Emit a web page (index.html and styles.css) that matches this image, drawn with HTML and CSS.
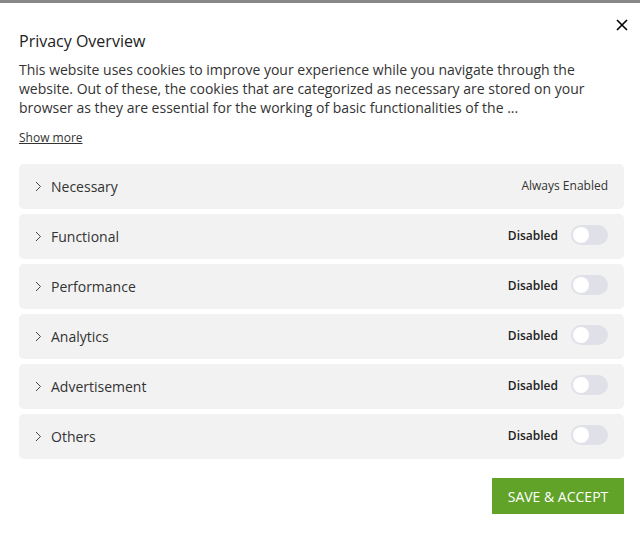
FILE: index.html
```html
<!DOCTYPE html>
<html lang="en">
<head>
<meta charset="utf-8">
<title>Privacy Overview</title>
<link rel="stylesheet" href="styles.css">
</head>
<body>
<div class="topbar"></div>
<div class="modal">
  <button class="close" aria-label="Close">
    <svg width="12" height="12" viewBox="0 0 12 12"><path d="M1 1L11 11M11 1L1 11" stroke="#000" stroke-width="1.6" fill="none"/></svg>
  </button>
  <h2 class="title">Privacy Overview</h2>
  <p class="desc">This website uses cookies to improve your experience while you navigate through the website. Out of these, the cookies that are categorized as necessary are stored on your browser as they are essential for the working of basic functionalities of the ...</p>
  <a class="more" href="#">Show more</a>
  <div class="list">
    <div class="row">
      <div class="label"><svg class="chev" width="7" height="11" viewBox="0 0 7 11"><path d="M1 1L5.5 5.5L1 10" stroke="#444" stroke-width="1" fill="none"/></svg>Necessary</div>
      <span class="always">Always Enabled</span>
    </div>
    <div class="row">
      <div class="label"><svg class="chev" width="7" height="11" viewBox="0 0 7 11"><path d="M1 1L5.5 5.5L1 10" stroke="#444" stroke-width="1" fill="none"/></svg>Functional</div>
      <div class="state"><span class="dis">Disabled</span><span class="toggle"><span class="knob"></span></span></div>
    </div>
    <div class="row">
      <div class="label"><svg class="chev" width="7" height="11" viewBox="0 0 7 11"><path d="M1 1L5.5 5.5L1 10" stroke="#444" stroke-width="1" fill="none"/></svg>Performance</div>
      <div class="state"><span class="dis">Disabled</span><span class="toggle"><span class="knob"></span></span></div>
    </div>
    <div class="row">
      <div class="label"><svg class="chev" width="7" height="11" viewBox="0 0 7 11"><path d="M1 1L5.5 5.5L1 10" stroke="#444" stroke-width="1" fill="none"/></svg>Analytics</div>
      <div class="state"><span class="dis">Disabled</span><span class="toggle"><span class="knob"></span></span></div>
    </div>
    <div class="row">
      <div class="label"><svg class="chev" width="7" height="11" viewBox="0 0 7 11"><path d="M1 1L5.5 5.5L1 10" stroke="#444" stroke-width="1" fill="none"/></svg>Advertisement</div>
      <div class="state"><span class="dis">Disabled</span><span class="toggle"><span class="knob"></span></span></div>
    </div>
    <div class="row">
      <div class="label"><svg class="chev" width="7" height="11" viewBox="0 0 7 11"><path d="M1 1L5.5 5.5L1 10" stroke="#444" stroke-width="1" fill="none"/></svg>Others</div>
      <div class="state"><span class="dis">Disabled</span><span class="toggle"><span class="knob"></span></span></div>
    </div>
  </div>
  <div class="footer">
    <button class="save">SAVE &amp; ACCEPT</button>
  </div>
</div>
</body>
</html>
```

FILE: styles.css
```css
* { box-sizing: border-box; }
html, body { margin: 0; padding: 0; background: #fff; }
body {
  font-family: "Open Sans", "Liberation Sans", sans-serif;
  color: #333;
}
.topbar { height: 3px; background: #888; }
.modal {
  position: relative;
  padding: 26px 16px 0 19px;
}
.close {
  position: absolute;
  top: 15px;
  right: 11px;
  background: none;
  border: 0;
  padding: 0;
  width: 14px;
  height: 14px;
  display: flex;
  align-items: center;
  justify-content: center;
}
.title {
  margin: 0;
  font-size: 16px;
  font-weight: 400;
  line-height: 24px;
  color: #222;
}
.desc {
  margin: 7px 0 0;
  font-size: 14px;
  line-height: 19px;
  color: #333;
}
.more {
  display: inline-block;
  margin-top: 13px;
  font-size: 12px;
  line-height: 16px;
  color: #333;
  text-decoration: underline;
}
.list {
  margin-top: 17px;
  display: flex;
  flex-direction: column;
  gap: 5px;
}
.row {
  height: 45px;
  background: #f2f2f2;
  border-radius: 5px;
  display: flex;
  align-items: center;
  justify-content: space-between;
  padding: 0 16px 0 16px;
}
.label {
  display: flex;
  align-items: center;
  font-size: 14px;
  color: #333;
}
.chev { margin-right: 9px; }
.always { font-size: 12px; color: #333; margin-top: -3px; }
.state { display: flex; align-items: center; margin-top: -3px; }
.dis { font-size: 12px; font-weight: 600; color: #222; margin-right: 13px; }
.toggle {
  width: 37px;
  height: 20px;
  border-radius: 10px;
  background: #e0e0e8;
  position: relative;
  display: block;
}
.knob {
  position: absolute;
  left: 2px;
  top: 2px;
  width: 16px;
  height: 16px;
  border-radius: 50%;
  background: #fff;
}
.footer {
  display: flex;
  justify-content: flex-end;
  margin-top: 19px;
}
.save {
  background: #61a229;
  color: #fff;
  border: 0;
  font-family: "Open Sans", "Liberation Sans", sans-serif;
  font-size: 14px;
  font-weight: 400;
  height: 36px;
  width: 132px;
  padding: 0;
}
```
